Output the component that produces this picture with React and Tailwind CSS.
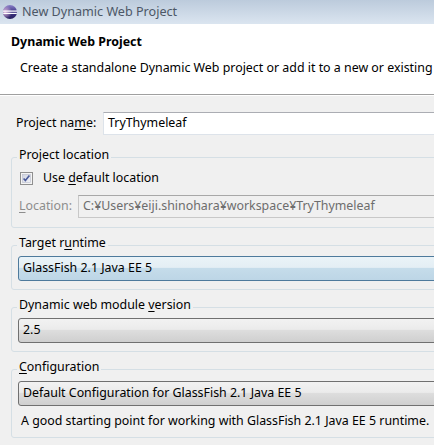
import React from "react";

const font = { fontFamily: '"Noto Sans", "Noto Sans CJK JP", sans-serif' };

const EclipseIcon = () => (
  <svg width="16" height="16" viewBox="0 0 16 16">
    <defs>
      <linearGradient id="ecl" x1="0" y1="0" x2="0" y2="1">
        <stop offset="0" stopColor="#8a80c8" />
        <stop offset="0.5" stopColor="#3d3585" />
        <stop offset="1" stopColor="#2a2160" />
      </linearGradient>
      <radialGradient id="glow" cx="0.15" cy="0.5" r="0.5">
        <stop offset="0" stopColor="#f4c8e8" stopOpacity="0.9" />
        <stop offset="1" stopColor="#f4c8e8" stopOpacity="0" />
      </radialGradient>
    </defs>
    <circle cx="8" cy="8" r="7" fill="url(#ecl)" />
    <circle cx="8" cy="8" r="7" fill="url(#glow)" />
    <rect x="1" y="6.5" width="14" height="1.2" fill="#ffffff" />
    <rect x="1.2" y="8.8" width="13.6" height="1.2" fill="#ffffff" />
  </svg>
);

const CheckBox = () => (
  <svg width="13" height="13" viewBox="0 0 13 13">
    <defs>
      <linearGradient id="cb" x1="0" y1="0" x2="1" y2="1">
        <stop offset="0" stopColor="#cfd3e0" />
        <stop offset="1" stopColor="#f2f3f7" />
      </linearGradient>
    </defs>
    <rect x="0.5" y="0.5" width="12" height="12" fill="#f4f4f4" stroke="#8f8f8f" />
    <rect x="2.5" y="2.5" width="8" height="8" fill="url(#cb)" stroke="#b9bccb" strokeWidth="0.6" />
    <path d="M3.6 6.4 L5.4 8.6 L9.4 3.6" fill="none" stroke="#4a5a9a" strokeWidth="1.6" />
  </svg>
);

const Group = ({ label, children, className = "" }) => (
  <div className={`border border-[#d5dfe5] rounded-[3px] px-[6px] ${className}`}>
    <div className="-mt-[11px] -ml-[1px] w-fit px-[2px] bg-[#f0f0f0] leading-[16px] text-black">
      {label}
    </div>
    {children}
  </div>
);

const Combo = ({ children, active }) => (
  <div
    className={`h-[25px] flex items-center pl-[4px] border rounded-[3px] ${
      active
        ? "border-[#4e7a9c] bg-[linear-gradient(#eaf3f8_0%,#e4eef4_45%,#c5dcea_50%,#bdd6e6_100%)]"
        : "border-[#707070] bg-[linear-gradient(#f2f2f2_0%,#ebebeb_45%,#dddddd_50%,#cfcfcf_100%)]"
    }`}
  >
    {children}
  </div>
);

export default function App() {
  return (
    <div className="w-[434px] h-[445px] overflow-hidden bg-[#f0f0f0] text-[12.4px] text-black whitespace-nowrap" style={font}>
      <div className="w-[520px]">
        <div className="h-[24px] flex items-center pl-[2px] gap-[4px] bg-gradient-to-b from-[#bccbdc] to-[#dbe5f0]">
          <EclipseIcon />
          <span className="text-[12.6px] text-[#4c5766]">New Dynamic Web Project</span>
        </div>
        <div className="h-[71px] bg-white border-b border-[#a0a0a0] pt-[10px]">
          <div className="pl-[11px] font-bold leading-[16px]">Dynamic Web Project</div>
          <div className="pl-[20px] mt-[10px] leading-[16px]">
            Create a standalone Dynamic Web project or add it to a new or existing
          </div>
        </div>
        <div className="border-t border-white pt-[16px] px-[11px]">
          <div className="flex items-center">
            <span className="pl-[5px] w-[92px]">
              Project na<u className="underline-offset-2">m</u>e:
            </span>
            <div className="flex-1 h-[23px] bg-white border border-[#dde3ea] border-t-[#abadb3] flex items-center pl-[4px]">
              TryThymeleaf
            </div>
          </div>

          <Group label="Project location" className="mt-[22px] pb-[9px]">
            <div className="flex items-center gap-[10px] mt-[6px] pl-[2px]">
              <CheckBox />
              <span>
                Use <u className="underline-offset-2">d</u>efault location
              </span>
            </div>
            <div className="flex items-center mt-[7px]">
              <span className="w-[60px] pl-[1px] text-[#8d8d8d]">
                <u className="underline-offset-2">L</u>ocation:
              </span>
              <div className="flex-1 h-[23px] bg-[#f0f0f0] border border-[#c8c8c8] border-t-[#a8a8a8] flex items-center pl-[4px] text-[#6d6d6d]">
                C:¥Users¥eiji.shinohara¥workspace¥TryThymeleaf
              </div>
            </div>
          </Group>

          <Group label={<span>Target r<u className="underline-offset-2">u</u>ntime</span>} className="mt-[17px] pb-[8px]">
            <div className="mt-[5px]">
              <Combo active>GlassFish 2.1 Java EE 5</Combo>
            </div>
          </Group>

          <Group label={<span>Dynamic web module <u className="underline-offset-2">v</u>ersion</span>} className="mt-[17px] pb-[8px]">
            <div className="mt-[5px]">
              <Combo>2.5</Combo>
            </div>
          </Group>

          <Group label={<span><u className="underline-offset-2">C</u>onfiguration</span>} className="mt-[17px] pb-[8px]">
            <div className="mt-[6px]">
              <Combo>Default Configuration for GlassFish 2.1 Java EE 5</Combo>
            </div>
            <div className="pl-[3px] mt-[7px] leading-[16px]">
              A good starting point for working with GlassFish 2.1 Java EE 5 runtime.
            </div>
          </Group>
        </div>
      </div>
    </div>
  );
}
